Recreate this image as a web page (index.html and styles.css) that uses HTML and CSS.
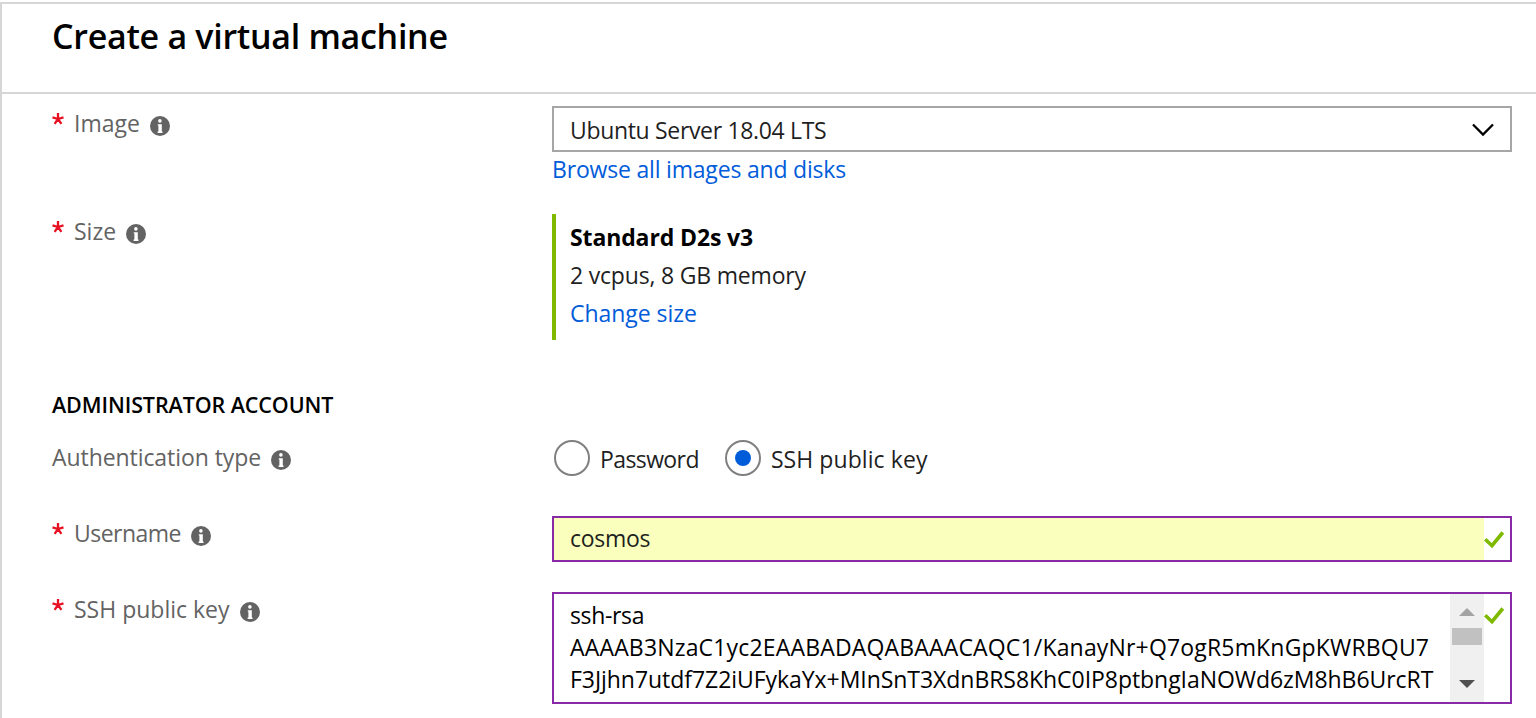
FILE: index.html
```html
<!DOCTYPE html>
<html lang="en">
<head>
<meta charset="utf-8">
<title>Create a virtual machine</title>
<link rel="stylesheet" href="styles.css">
</head>
<body>
<svg width="0" height="0" class="defs">
  <symbol id="info" viewBox="0 0 20 20">
    <circle cx="10" cy="10" r="10" fill="#636363"/>
    <circle cx="9.900" cy="4.900" r="1.800" fill="#fff"/>
    <path d="M7.800 8.200h4v7.200h.7v1.500H7.600v-1.500h.8V9.600h-.6z" fill="#fff"/>
  </symbol>
  <symbol id="check" viewBox="0 0 20 18">
    <path d="M1.200 8.200l6.800 6.500L18.800 1.500" fill="none" stroke="#7fba00" stroke-width="3.600"/>
  </symbol>
  <symbol id="star" viewBox="0 0 12 12">
    <path d="M6 6V0M6 6L.5 4.300M6 6l5.500-1.700M6 6l-3.400 4.800M6 6l3.400 4.800" fill="none" stroke="#e81123" stroke-width="2.300"/>
  </symbol>
</svg>
<main class="blade">
  <header class="blade-header"><h1><span class="t title">Create a virtual machine</span></h1></header>
  <form class="form">
    <div class="row row-image">
      <div class="label"><svg class="star"><use href="#star"/></svg><span class="t">Image</span><svg class="info"><use href="#info"/></svg></div>
      <div class="field">
        <div class="select"><span class="t v-image">Ubuntu Server 18.04 LTS</span>
          <svg class="chevron" viewBox="0 0 22 14"><path d="M1 1.500l10 10 10-10" fill="none" stroke="#000" stroke-width="2.300"/></svg></div>
        <a class="link"><span class="t browse">Browse all images and disks</span></a>
      </div>
    </div>
    <div class="row row-size">
      <div class="label"><svg class="star"><use href="#star"/></svg><span class="t">Size</span><svg class="info"><use href="#info"/></svg></div>
      <div class="size-card">
        <strong><span class="t s-name">Standard D2s v3</span></strong>
        <div><span class="t s-spec">2 vcpus, 8 GB memory</span></div>
        <a class="link"><span class="t s-change">Change size</span></a>
      </div>
    </div>
    <h2><span class="t section">ADMINISTRATOR ACCOUNT</span></h2>
    <div class="row row-auth">
      <div class="label"><span class="t l-auth">Authentication type</span><svg class="info"><use href="#info"/></svg></div>
      <div class="radios">
        <span class="radio"></span><span class="t r-pass">Password</span>
        <span class="radio checked"></span><span class="t r-ssh">SSH public key</span>
      </div>
    </div>
    <div class="row row-user">
      <div class="label"><svg class="star"><use href="#star"/></svg><span class="t l-user">Username</span><svg class="info"><use href="#info"/></svg></div>
      <div class="input"><div class="autofill"><span class="t v-user">cosmos</span></div><svg class="check"><use href="#check"/></svg></div>
    </div>
    <div class="row row-ssh">
      <div class="label"><svg class="star"><use href="#star"/></svg><span class="t">SSH public key</span><svg class="info"><use href="#info"/></svg></div>
      <div class="input area">
        <div class="key"><span class="t k1">ssh-rsa</span><br><span class="t k2">AAAAB3NzaC1yc2EAABADAQABAAACAQC1/KanayNr+Q7ogR5mKnGpKWRBQU7</span><br><span class="t k3">F3Jjhn7utdf7Z2iUFykaYx+MInSnT3XdnBRS8KhC0IP8ptbngIaNOWd6zM8hB6UrcRT</span></div>
        <div class="scrollbar"><i class="up"></i><i class="thumb"></i><i class="down"></i></div>
        <svg class="check"><use href="#check"/></svg>
      </div>
    </div>
  </form>
</main>
</body>
</html>
```
FILE: styles.css
```css
* { box-sizing: border-box; }
body { margin: 0; background: #fff; color: #1f1f1f; font: 400 23px/32px "Open Sans", "Noto Sans", sans-serif; overflow: hidden; }
.defs { position: absolute; }
.t { white-space: nowrap; }
.title { letter-spacing: -.29px; }
.v-image { letter-spacing: -.33px; }
.browse { letter-spacing: -.19px; }
.s-name { letter-spacing: -.12px; }
.s-spec { letter-spacing: -.19px; }
.s-change { letter-spacing: -.05px; }
.section { letter-spacing: -.1px; }
.l-auth { letter-spacing: -.07px; }
.r-pass { letter-spacing: -.6px; }
.r-ssh { letter-spacing: .08px; }
.l-user { letter-spacing: -.52px; }
.v-user { letter-spacing: -.3px; }
.k1 { letter-spacing: -.35px; }
.k2 { letter-spacing: .17px; }
.k3 { letter-spacing: -.05px; }
.blade { margin-top: 2px; height: 716px; border: 2px solid #d6d6d6; border-width: 2px 0 0 2px; overflow: hidden; }
.blade-header { height: 90px; padding: 7px 0 0 50px; border-bottom: 2px solid #d6d6d6; }
h1 { margin: 0; font-size: 34px; line-height: 50px; font-weight: 600; color: #000; }
.form { padding: 12px 24px 0 50px; }
.row { display: grid; grid-template-columns: 500px 960px; align-items: start; }
.label { display: flex; align-items: center; color: #636363; height: 34px; }
.star { width: 12px; height: 12px; margin: -8px 10px 0 0; flex: none; }
.info { width: 20px; height: 20px; margin: 6px 0 0 10px; flex: none; }
.row-image { height: 108px; }
.row-size { height: 175px; }
.select { height: 46px; border: 2px solid #a6a6a6; padding: 1px 16px 0; display: flex; align-items: center; justify-content: space-between; }
.chevron { width: 22px; height: 14px; }
.link { display: block; color: #015cda; }
.field .link { margin-top: 1px; }
.size-card { height: 126px; border-left: 4px solid #7fba00; padding: 4px 0 0 14px; line-height: 38px; }
.size-card strong { color: #000; display: block; }
h2 { margin: 0; font-size: 21.500px; line-height: 32px; font-weight: 600; color: #000; height: 51px; }
.row-auth { height: 76px; }
.radios { display: flex; align-items: center; height: 36px; }
.radios .t { padding-top: 2px; }
.radio { width: 36px; height: 36px; border: 2px solid #808080; border-radius: 50%; display: grid; place-items: center; margin: 0 10px 0 2px; flex: none; }
.radio.checked { margin-left: 26px; }
.radio.checked::after { content: ""; width: 16px; height: 16px; border-radius: 50%; background: #015cda; }
.row-user { height: 76px; }
.input { height: 46px; border: 2px solid #882aa5; display: flex; }
.autofill { width: 930px; background: #faffbd; padding: 4px 16px 0; }
.check { width: 20px; height: 18px; margin-top: 13px; }
.area { height: 112px; }
.key { width: 896px; padding: 5px 16px 0; color: #000; }
.scrollbar { width: 34px; background: #f0f0f0; display: flex; flex-direction: column; align-items: center; }
.up, .down { border: 8px solid transparent; border-top: 0; border-bottom: 8px solid #a3a3a3; margin-top: 14px; }
.thumb { width: 30px; height: 17px; background: #c1c1c1; margin-top: 12px; }
.down { border-bottom: 0; border-top: 8px solid #505050; margin-top: 35px; }
```
